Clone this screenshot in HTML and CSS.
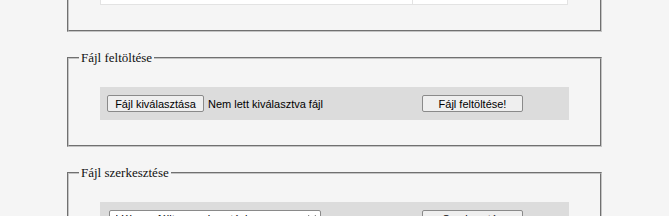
FILE: index.html
```html
<!doctype html>
<html lang="hu">
  <head>
    <meta charset="UTF-8" />
    <meta name="viewport" content="width=device-width, initial-scale=1.0" />
    <title>Fájlkezelő</title>
    <link rel="stylesheet" href="styles.css">
  </head>

  <body>
    <div class="page">
      <fieldset class="box files">
        <legend>Feltöltött fájlok</legend>
        <table class="file-list">
          <tr>
            <th>Fájlnév</th>
            <th>Méret</th>
          </tr>
          <tr>
            <td>jegyzet.txt</td>
            <td>2 KB</td>
          </tr>
          <tr>
            <td>adatok.csv</td>
            <td>14 KB</td>
          </tr>
        </table>
      </fieldset>

      <fieldset class="box">
        <legend>Fájl feltöltése</legend>
        <div class="row">
          <div class="file-pick">
            <button class="btn pick">Fájl kiválasztása</button>
            <span class="file-name">Nem lett kiválasztva fájl</span>
          </div>
          <button class="btn send">Fájl feltöltése!</button>
        </div>
      </fieldset>

      <fieldset class="box">
        <legend>Fájl szerkesztése</legend>
        <div class="row">
          <div class="file-pick">
            <select class="file-select">
              <option>Válassz fájlt a szerkesztéshez</option>
            </select>
          </div>
          <button class="btn send">Szerkesztés</button>
        </div>
      </fieldset>
    </div>
  </body>
</html>
```

FILE: styles.css
```css
html {
  background: #f5f5f5;
}
body {
  margin: 0;
  font-family: "Liberation Serif", "Times New Roman", serif;
  color: #222;
}
.page {
  width: 535px;
  margin: -105px auto 0;
}
.box {
  margin: 0 0 18px;
  padding: 0 10px;
  border: 2px groove #c4c4c4;
  min-width: 0;
}
.box legend {
  padding: 0 2px;
  font-size: 13px;
  line-height: 15px;
  color: #111;
}

.file-list {
  width: 468px;
  margin: 22px 21px 25px;
  border-collapse: collapse;
  background: #fff;
  font-family: "Liberation Sans", Arial, sans-serif;
  font-size: 11px;
}
.file-list th,
.file-list td {
  border: 1px solid #e3e3e3;
  height: 22px;
  padding: 1px 6px 0;
  text-align: left;
  vertical-align: top;
}
.file-list th:first-child,
.file-list td:first-child {
  width: 299px;
}

.row {
  display: flex;
  align-items: center;
  margin: 22px 21px 25px;
  padding: 8px 46px 8px 7px;
  background: #dcdcdc;
  font-family: "Liberation Sans", Arial, sans-serif;
  font-size: 11px;
}
.file-pick {
  flex: 1;
  display: flex;
  align-items: center;
}
.btn {
  height: 17px;
  padding: 0 6px;
  font-family: "Liberation Sans", Arial, sans-serif;
  font-size: 11px;
  color: #000;
  background: #efefef;
  border: 1px solid #8a8a8a;
  border-radius: 2px;
}
.pick {
  width: 97px;
}
.send {
  width: 101px;
}
.file-name {
  margin-left: 4px;
  color: #000;
}
.file-select {
  width: 212px;
  height: 17px;
  margin-left: 2px;
  padding: 0 2px;
  font-family: "Liberation Sans", Arial, sans-serif;
  font-size: 11px;
  background: #fff;
  border: 1px solid #8a8a8a;
  border-radius: 2px;
}
```
